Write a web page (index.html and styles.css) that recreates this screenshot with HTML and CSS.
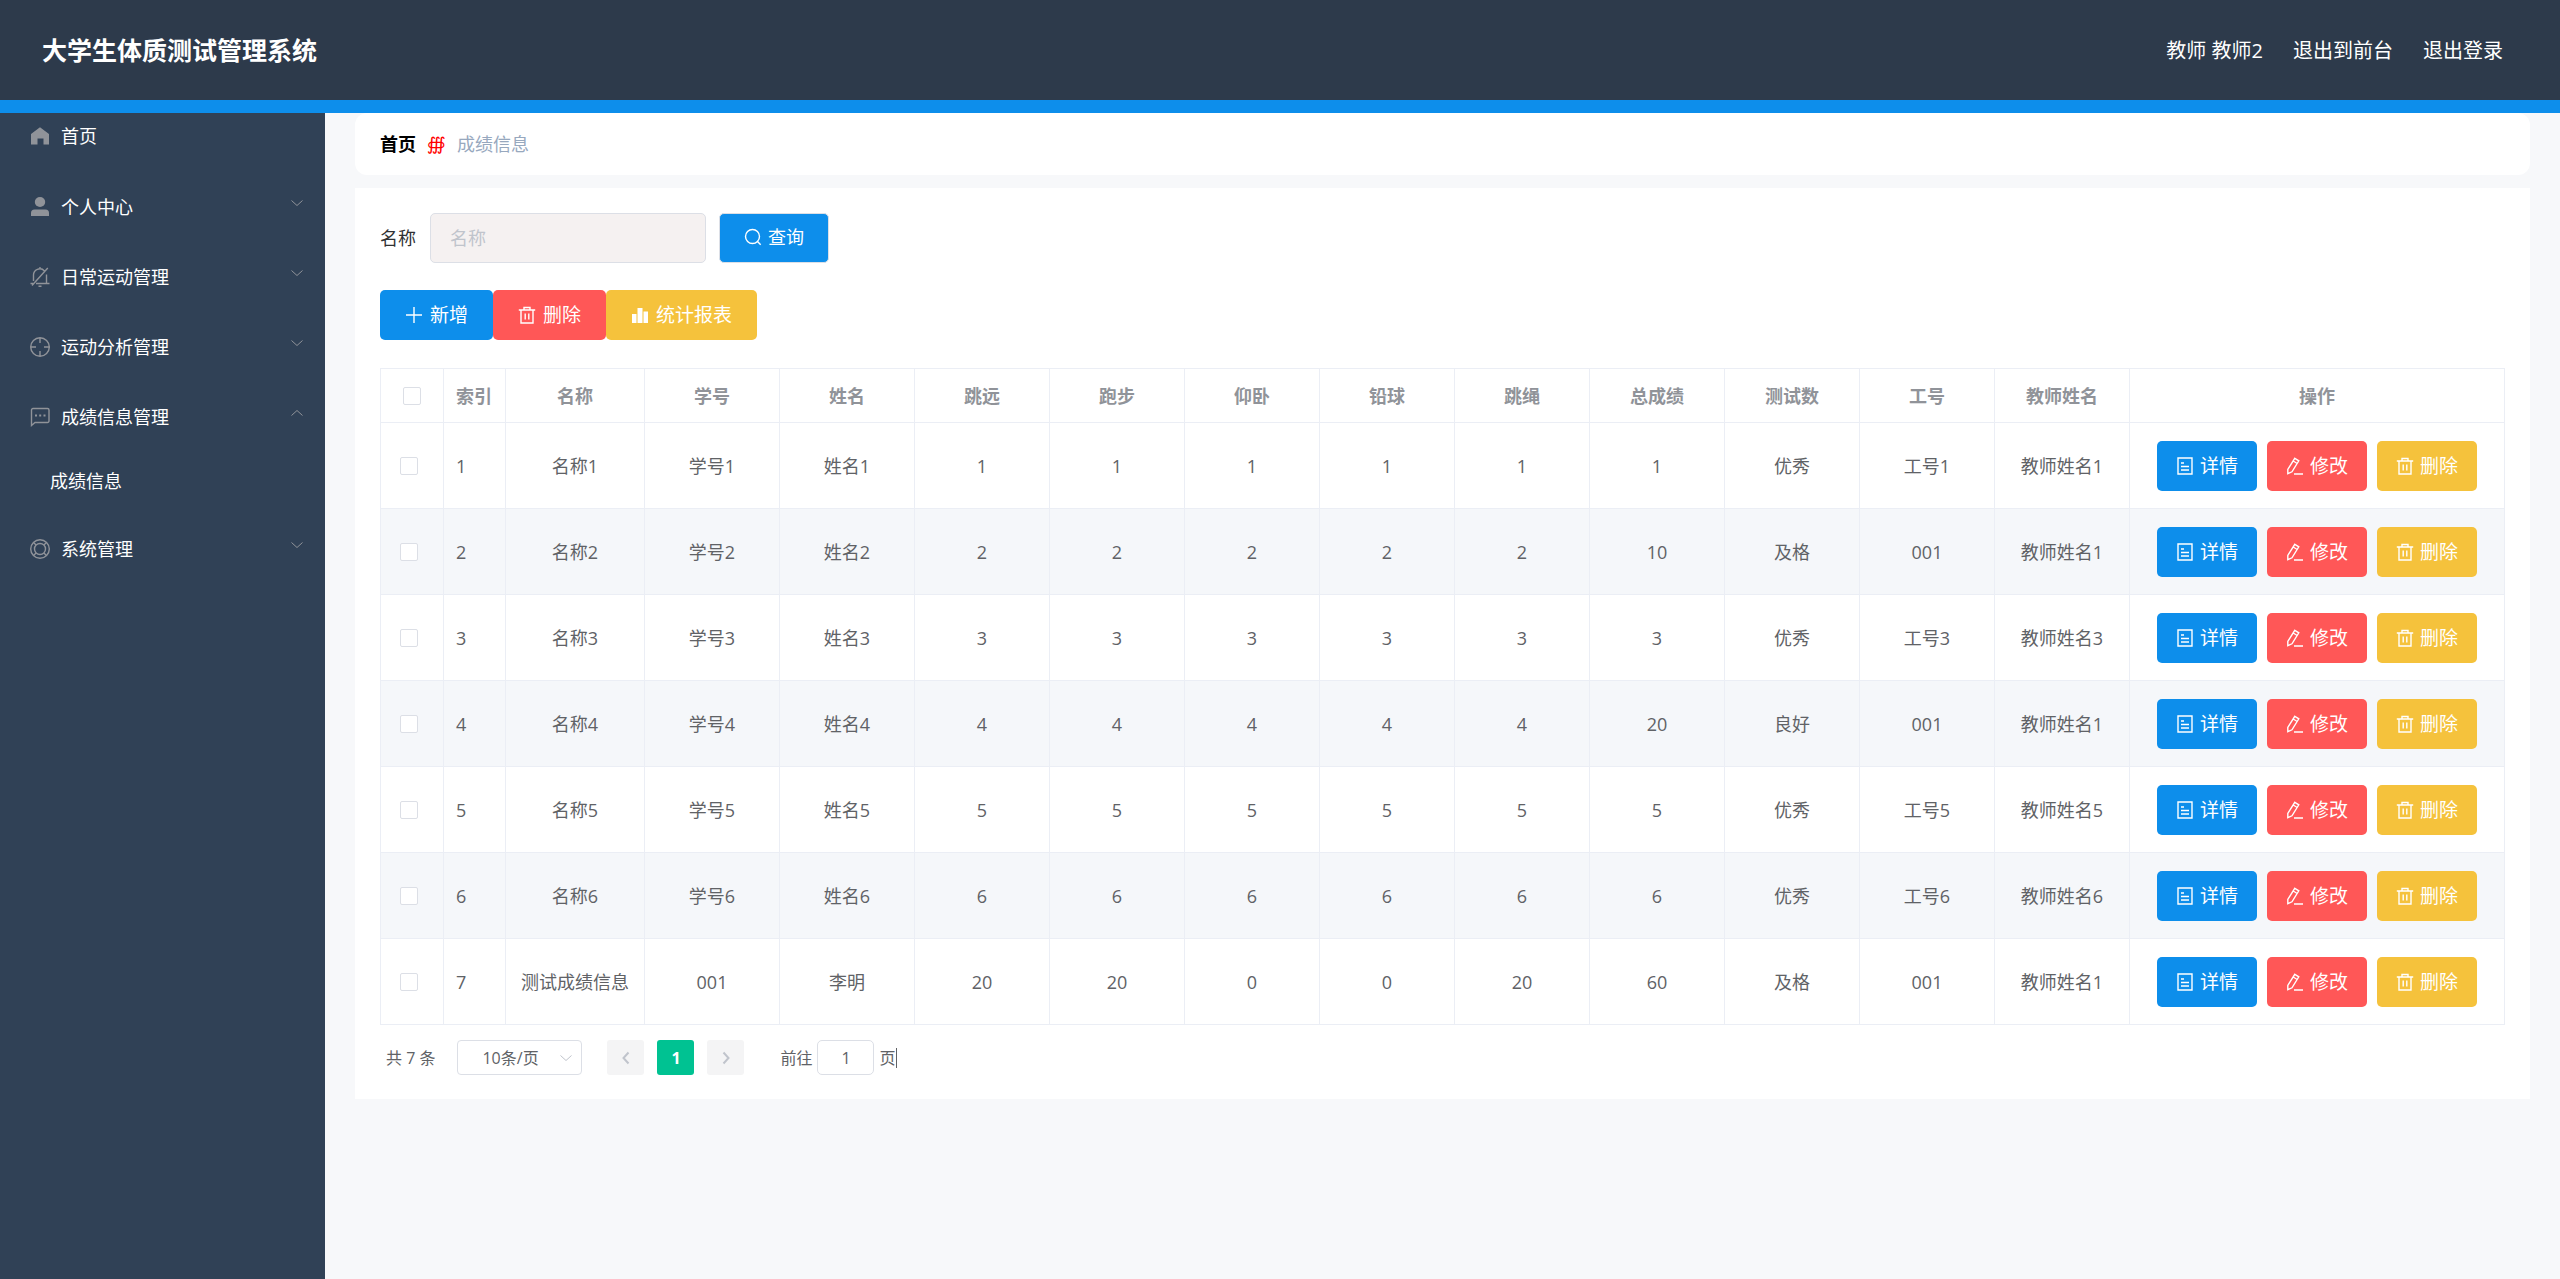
FILE: index.html
```html
<!DOCTYPE html>
<html lang="zh-CN">
<head>
<meta charset="utf-8">
<meta name="viewport" content="width=device-width, initial-scale=1">
<title>大学生体质测试管理系统</title>
<link rel="stylesheet" href="styles.css">
</head>
<body>
<svg class="sprite" aria-hidden="true">
  <symbol id="i-home" viewBox="0 0 20 20"><path fill="currentColor" d="M10 1.200 19 8v10.500h-5.500v-6h-6v6H1V8z"/></symbol>
  <symbol id="i-user" viewBox="0 0 20 20"><ellipse cx="10" cy="5" rx="5.200" ry="5" fill="currentColor"/><path fill="currentColor" d="M1 19V16a3.500 3.500 0 0 1 3.500-3.500h11A3.500 3.500 0 0 1 19 16v3z"/></symbol>
  <symbol id="i-bell" viewBox="0 0 20 20"><path class="side" d="M10 0v2.500M3.500 14V8.500a6.300 6.300 0 0 1 11-4.500M16.500 7.500V16.500M6 16.500h13.500M.5 16.500h2.500M8.500 19.300h3M2 18.500 17.800 1"/></symbol>
  <symbol id="i-aim" viewBox="0 0 20 20"><path class="side" d="M10 .7a9.300 9.300 0 1 1 0 18.600A9.300 9.300 0 0 1 10 .7zM10 1v5M10 14V19M1 10h5M14 10H19"/></symbol>
  <symbol id="i-chat" viewBox="0 0 20 20"><path class="side" d="M1.500 18.500V3a1.500 1.500 0 0 1 1.500-1.500h14.500A1.500 1.500 0 0 1 19 3V14a1.500 1.500 0 0 1-1.500 1.500H5z"/><path fill="currentColor" d="M5 7.500h2v2H5zM9.200 7.500h2v2h-2zM13.500 7.500h2v2h-2z"/></symbol>
  <symbol id="i-ring" viewBox="0 0 20 20"><circle class="side" cx="10" cy="10" r="9.300"/><circle class="side" cx="10" cy="10" r="5.500"/><path class="side" d="m3.500 3.500 2.600 2.600M16.500 3.500l-2.600 2.600M3.500 16.500l2.600-2.600M16.500 16.500l-2.600-2.600"/></symbol>
  <symbol id="i-down" viewBox="0 0 14 14"><path class="line" d="m1.500 4.500 5.500 5 5.500-5"/></symbol>
  <symbol id="i-up" viewBox="0 0 14 14"><path class="line" d="m1.500 9.500 5.500-5 5.500 5"/></symbol>
  <symbol id="i-left" viewBox="0 0 14 14"><path class="bold" d="M9.500 1.500 4.500 7l5 5.500"/></symbol>
  <symbol id="i-right" viewBox="0 0 14 14"><path class="bold" d="m4.500 1.500 5 5.500-5 5.500"/></symbol>
  <symbol id="i-search" viewBox="0 0 18 18"><circle class="mid" cx="8.500" cy="8.500" r="7"/><path class="mid" d="m13.500 13.500 3.200 3.200"/></symbol>
  <symbol id="i-plus" viewBox="0 0 18 18"><path class="mid" d="M9 1v16M1 9h16"/></symbol>
  <symbol id="i-trash" viewBox="0 0 18 18"><path class="mid" d="M.8 4h16.400M3 4v13h12V4M6 4V1.500h6V4M7.200 7.500v6M10.800 7.500v6"/></symbol>
  <symbol id="i-chart" viewBox="0 0 18 18"><path fill="currentColor" d="M1 8h4.500v9H1zM6.500 2h5v15h-5zM12.500 5.500H17V17h-4.500z"/></symbol>
  <symbol id="i-doc" viewBox="0 0 18 18"><path class="mid" d="M2 1h14v16H2zM5 6h3M5 9.500h8M5 13h8"/></symbol>
  <symbol id="i-edit" viewBox="0 0 18 18"><path class="mid" d="m8.800 1.300 4 2.500L6 14.800l-4.200 1.900V12.500zM7.200 4l4 2.500M8 17h9"/></symbol>
</svg>

<header class="topbar">
  <h1 class="brand">大学生体质测试管理系统</h1>
  <nav class="account">
    <span>教师 教师2</span>
    <a href="#front">退出到前台</a>
    <a href="#logout">退出登录</a>
  </nav>
</header>

<div class="shell">
  <nav class="sidebar" aria-label="主菜单">
    <a class="menu home" href="#home"><svg class="menu-icon"><use href="#i-home"/></svg><span>首页</span></a>
    <button class="menu" type="button"><svg class="menu-icon"><use href="#i-user"/></svg><span>个人中心</span><svg class="arrow"><use href="#i-down"/></svg></button>
    <button class="menu" type="button"><svg class="menu-icon"><use href="#i-bell"/></svg><span>日常运动管理</span><svg class="arrow"><use href="#i-down"/></svg></button>
    <button class="menu" type="button"><svg class="menu-icon"><use href="#i-aim"/></svg><span>运动分析管理</span><svg class="arrow"><use href="#i-down"/></svg></button>
    <button class="menu" type="button" aria-expanded="true"><svg class="menu-icon"><use href="#i-chat"/></svg><span>成绩信息管理</span><svg class="arrow"><use href="#i-up"/></svg></button>
    <a class="submenu" href="#scores">成绩信息</a>
    <button class="menu" type="button"><svg class="menu-icon"><use href="#i-ring"/></svg><span>系统管理</span><svg class="arrow"><use href="#i-down"/></svg></button>
  </nav>

  <main class="content">
    <nav class="crumbs" aria-label="位置">
      <a href="#home">首页</a><span class="mark">∰</span><span class="here">成绩信息</span>
    </nav>

    <section class="panel">
      <form class="search">
        <label for="name">名称</label>
        <input class="field" id="name" type="text" placeholder="名称">
        <button class="btn query" type="button"><svg><use href="#i-search"/></svg>查询</button>
      </form>

      <div class="tools">
        <button class="btn blue" type="button"><svg><use href="#i-plus"/></svg>新增</button>
        <button class="btn red" type="button"><svg><use href="#i-trash"/></svg>删除</button>
        <button class="btn gold" type="button"><svg><use href="#i-chart"/></svg>统计报表</button>
      </div>

      <table class="grid">
        <colgroup><col class="c-check"><col class="c-index"><col class="c-name"><col span="11"><col class="c-ops"></colgroup>
        <thead>
          <tr><th><input type="checkbox" aria-label="全选"></th><th class="index">索引</th><th>名称</th><th>学号</th><th>姓名</th><th>跳远</th><th>跑步</th><th>仰卧</th><th>铅球</th><th>跳绳</th><th>总成绩</th><th>测试数</th><th>工号</th><th>教师姓名</th><th>操作</th></tr>
        </thead>
        <tbody>
          <tr><td class="check"><input type="checkbox" aria-label="选择第1行"></td><td class="index">1</td><td>名称1</td><td>学号1</td><td>姓名1</td><td>1</td><td>1</td><td>1</td><td>1</td><td>1</td><td>1</td><td>优秀</td><td>工号1</td><td>教师姓名1</td>
            <td><div class="ops"><button class="btn blue" type="button"><svg><use href="#i-doc"/></svg>详情</button><button class="btn red" type="button"><svg><use href="#i-edit"/></svg>修改</button><button class="btn gold" type="button"><svg><use href="#i-trash"/></svg>删除</button></div></td></tr>
          <tr><td class="check"><input type="checkbox" aria-label="选择第2行"></td><td class="index">2</td><td>名称2</td><td>学号2</td><td>姓名2</td><td>2</td><td>2</td><td>2</td><td>2</td><td>2</td><td>10</td><td>及格</td><td>001</td><td>教师姓名1</td>
            <td><div class="ops"><button class="btn blue" type="button"><svg><use href="#i-doc"/></svg>详情</button><button class="btn red" type="button"><svg><use href="#i-edit"/></svg>修改</button><button class="btn gold" type="button"><svg><use href="#i-trash"/></svg>删除</button></div></td></tr>
          <tr><td class="check"><input type="checkbox" aria-label="选择第3行"></td><td class="index">3</td><td>名称3</td><td>学号3</td><td>姓名3</td><td>3</td><td>3</td><td>3</td><td>3</td><td>3</td><td>3</td><td>优秀</td><td>工号3</td><td>教师姓名3</td>
            <td><div class="ops"><button class="btn blue" type="button"><svg><use href="#i-doc"/></svg>详情</button><button class="btn red" type="button"><svg><use href="#i-edit"/></svg>修改</button><button class="btn gold" type="button"><svg><use href="#i-trash"/></svg>删除</button></div></td></tr>
          <tr><td class="check"><input type="checkbox" aria-label="选择第4行"></td><td class="index">4</td><td>名称4</td><td>学号4</td><td>姓名4</td><td>4</td><td>4</td><td>4</td><td>4</td><td>4</td><td>20</td><td>良好</td><td>001</td><td>教师姓名1</td>
            <td><div class="ops"><button class="btn blue" type="button"><svg><use href="#i-doc"/></svg>详情</button><button class="btn red" type="button"><svg><use href="#i-edit"/></svg>修改</button><button class="btn gold" type="button"><svg><use href="#i-trash"/></svg>删除</button></div></td></tr>
          <tr><td class="check"><input type="checkbox" aria-label="选择第5行"></td><td class="index">5</td><td>名称5</td><td>学号5</td><td>姓名5</td><td>5</td><td>5</td><td>5</td><td>5</td><td>5</td><td>5</td><td>优秀</td><td>工号5</td><td>教师姓名5</td>
            <td><div class="ops"><button class="btn blue" type="button"><svg><use href="#i-doc"/></svg>详情</button><button class="btn red" type="button"><svg><use href="#i-edit"/></svg>修改</button><button class="btn gold" type="button"><svg><use href="#i-trash"/></svg>删除</button></div></td></tr>
          <tr><td class="check"><input type="checkbox" aria-label="选择第6行"></td><td class="index">6</td><td>名称6</td><td>学号6</td><td>姓名6</td><td>6</td><td>6</td><td>6</td><td>6</td><td>6</td><td>6</td><td>优秀</td><td>工号6</td><td>教师姓名6</td>
            <td><div class="ops"><button class="btn blue" type="button"><svg><use href="#i-doc"/></svg>详情</button><button class="btn red" type="button"><svg><use href="#i-edit"/></svg>修改</button><button class="btn gold" type="button"><svg><use href="#i-trash"/></svg>删除</button></div></td></tr>
          <tr><td class="check"><input type="checkbox" aria-label="选择第7行"></td><td class="index">7</td><td>测试成绩信息</td><td>001</td><td>李明</td><td>20</td><td>20</td><td>0</td><td>0</td><td>20</td><td>60</td><td>及格</td><td>001</td><td>教师姓名1</td>
            <td><div class="ops"><button class="btn blue" type="button"><svg><use href="#i-doc"/></svg>详情</button><button class="btn red" type="button"><svg><use href="#i-edit"/></svg>修改</button><button class="btn gold" type="button"><svg><use href="#i-trash"/></svg>删除</button></div></td></tr>
        </tbody>
      </table>

      <div class="pager">
        <span class="total">共 7 条</span>
        <div class="size">
          <select aria-label="每页条数"><option>10条/页</option></select>
          <svg><use href="#i-down"/></svg>
        </div>
        <div class="pages">
          <button type="button" aria-label="上一页"><svg><use href="#i-left"/></svg></button>
          <button class="current" type="button">1</button>
          <button type="button" aria-label="下一页"><svg><use href="#i-right"/></svg></button>
        </div>
        <label class="jump">前往<input type="text" value="1"><span class="unit">页</span></label>
      </div>
    </section>
  </main>
</div>
</body>
</html>
```
FILE: styles.css
```css
* { box-sizing: border-box; }

body {
  margin: 0;
  min-height: 100vh;
  display: flex;
  flex-direction: column;
  background: #f7f8fa;
  color: #606266;
  font: 18px/24px "Open Sans", "Noto Sans CJK SC", sans-serif;
}

a { color: inherit; text-decoration: none; }
button, input, select { font: inherit; color: inherit; margin: 0; }
button { border: 0; cursor: pointer; }

.sprite { display: none; }
.line, .side, .mid, .bold { fill: none; stroke: currentColor; stroke-width: 1; }
.side { stroke-width: 1.4; }
.mid { stroke-width: 1.4; }
.bold { stroke-width: 2; }

.topbar {
  display: flex;
  align-items: center;
  justify-content: space-between;
  height: 113px;
  padding: 0 57px 0 42px;
  background: #2d3a4b;
  border-bottom: 13px solid #0d8eeb;
  color: #fff;
}
.brand { margin: 0; font-size: 25px; line-height: 36px; }
.account { display: flex; gap: 30px; padding-top: 2px; font-size: 20px; line-height: 28px; }

.shell { flex: 1; display: flex; }

.sidebar {
  flex: 0 0 325px;
  background: #304156;
  color: #fff;
}
.menu {
  display: flex;
  align-items: center;
  gap: 11px;
  width: 100%;
  height: 70px;
  padding: 0 21px 2px 30px;
  background: none;
  text-align: left;
}
.home { height: 60px; padding-bottom: 14px; }
.menu-icon { width: 20px; height: 20px; color: #909399; }
.arrow { width: 14px; height: 14px; margin: 0 0 8px auto; color: #909399; }
.submenu { display: block; padding: 16px 50px 22px; }

.content { flex: 1; min-width: 0; padding: 0 30px; }

.crumbs {
  display: flex;
  align-items: center;
  gap: 11px;
  height: 62px;
  margin-bottom: 13px;
  padding: 0 25px;
  background: #fff;
  border-radius: 12px;
}
.crumbs a { color: #000; font-weight: 700; }
.mark { color: #f00; font-family: "DejaVu Serif", "DejaVu Sans", serif; }
.here { color: #97a8be; }

.panel { padding: 25px 25px 24px; background: #fff; }

.search { display: flex; align-items: center; }
.search label { color: #303133; margin-right: 14px; }
.field {
  width: 276px;
  height: 50px;
  margin-right: 13px;
  padding: 0 19px;
  border: 1px solid #dcdfe6;
  border-radius: 5px;
  background: #f5f1f1;
  outline: 0;
}
.field::placeholder { color: #c0c4cc; opacity: 1; }

.btn {
  display: flex;
  align-items: center;
  justify-content: center;
  gap: 6px;
  height: 50px;
  padding: 0 25px;
  border-radius: 5px;
  color: #fff;
  font-size: 19px;
  white-space: nowrap;
}
.btn svg { width: 18px; height: 18px; }
.query { padding: 0 24px 2px; background: #0d8eeb; border: 1px solid #dcdfe6; font-size: 18px; }
.blue { background: #0d8eeb; }
.red { background: #ff5757; }
.gold { background: #f5c23c; }

.tools { display: flex; margin: 27px 0 28px; }
.tools .btn { gap: 7px; }

.grid {
  width: 100%;
  table-layout: fixed;
  border-collapse: collapse;
  text-align: center;
}
.c-check { width: 63px; }
.c-index { width: 62px; }
.c-name { width: 139px; }
.c-ops { width: 375px; }
.grid th, .grid td { padding: 0; border: 1px solid #ebeef5; }
.grid th { height: 54px; color: #909399; font-weight: 700; }
.grid td { height: 86px; }
.grid tbody tr:nth-child(even) { background: #f5f7fa; }
.grid .index { padding-left: 12px; text-align: left; }
.grid .check { padding-right: 6px; }
.grid input {
  appearance: none;
  display: block;
  width: 18px;
  height: 18px;
  margin: 0 auto;
  border: 1px solid #dcdfe6;
  border-radius: 2px;
  background: #fff;
}
.ops { display: flex; justify-content: center; gap: 10px; }
.ops .btn { width: 100px; padding: 0; }

.pager {
  display: flex;
  align-items: center;
  margin-top: 15px;
  padding-left: 6px;
  font-size: 16px;
}
.size { position: relative; margin: 0 25px 0 22px; }
.size select {
  appearance: none;
  display: block;
  width: 125px;
  height: 35px;
  padding: 0 24px;
  border: 1px solid #dcdfe6;
  border-radius: 4px;
  background: #fff;
}
.size svg { position: absolute; right: 9px; top: 11px; width: 14px; height: 14px; color: #c0c4cc; pointer-events: none; }
.pages { display: flex; gap: 13px; margin-right: 36px; }
.pages button {
  display: grid;
  place-items: center;
  width: 37px;
  height: 35px;
  padding: 0;
  border-radius: 3px;
  background: #f4f4f5;
  color: #c0c4cc;
}
.pages svg { width: 14px; height: 14px; }
.pages .current { background: #00c292; color: #fff; font-weight: 700; }
.jump { display: flex; align-items: center; gap: 5px; }
.jump input {
  width: 57px;
  height: 35px;
  padding: 0;
  border: 1px solid #dcdfe6;
  border-radius: 5px;
  text-align: center;
}
.unit { border-right: 1px solid #606266; line-height: 20px; }
```
